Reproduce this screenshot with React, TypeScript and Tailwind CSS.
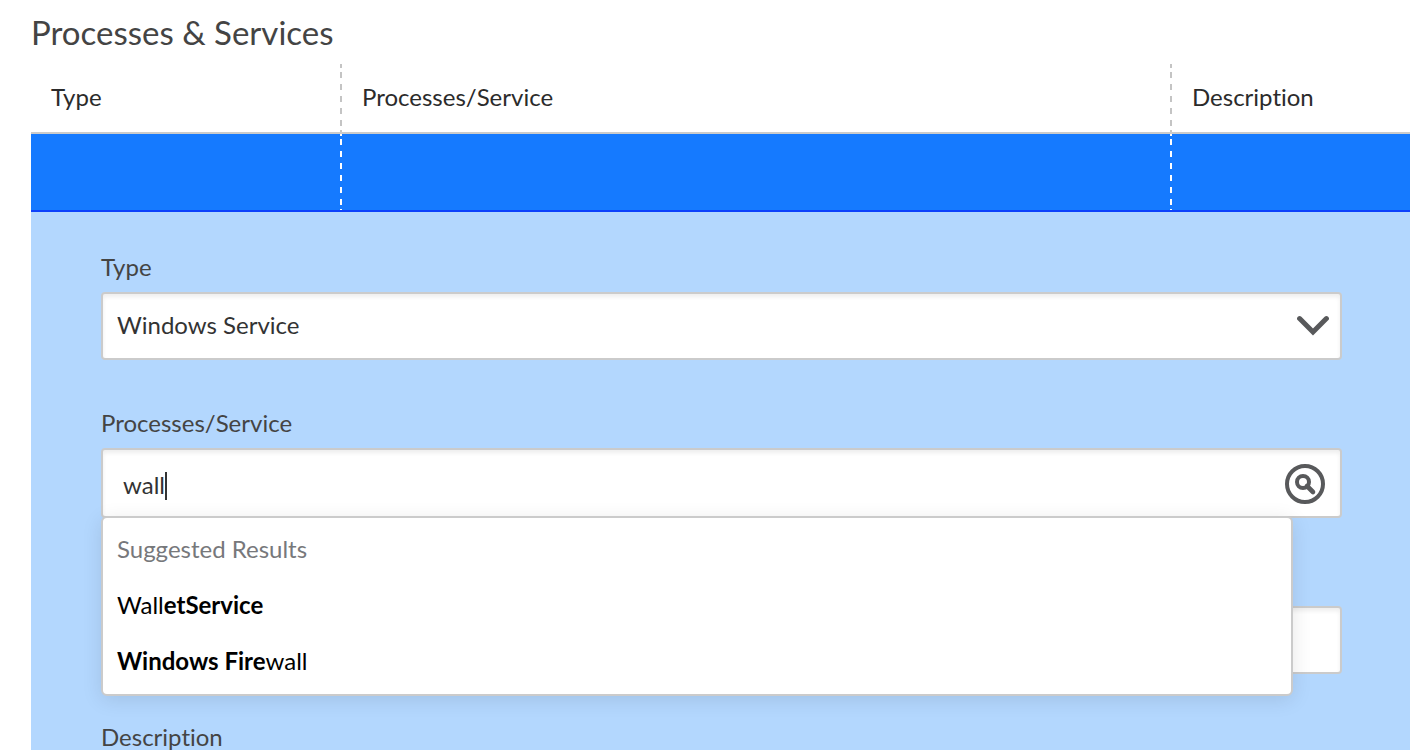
import { useState } from "react";

const suggestions = [
  { id: "wallet", parts: [{ text: "Wall" }, { text: "etService", bold: true }] },
  { id: "firewall", parts: [{ text: "Windows Fire", bold: true }, { text: "wall" }] },
];

const fieldClass =
  "block w-full rounded-[4px] border-2 border-[#cbcbcb] bg-white text-[#333] shadow-[inset_0_3px_4px_rgba(0,0,0,0.07)] outline-none";
const labelClass = "block text-2xl leading-8 text-[#444]";

// dashed column dividers, with a short dash at both ends
const headDash =
  "[background:linear-gradient(#c4c4c4,#c4c4c4)_right_top/2px_4px_no-repeat,linear-gradient(#c4c4c4,#c4c4c4)_right_bottom/2px_2px_no-repeat,linear-gradient(#c4c4c4_50%,transparent_50%)_right_8px/2px_12px_repeat-y]";
const rowDash =
  "[background:linear-gradient(#fff,#fff)_right_top/2px_2px_no-repeat,linear-gradient(#fff,#fff)_right_bottom/2px_1px_no-repeat,linear-gradient(#fff_50%,transparent_50%)_right_5px/2px_12px_repeat-y]";

function ChevronIcon() {
  return (
    <svg
      className="pointer-events-none absolute top-1/2 right-[13px] h-6 w-8 -translate-y-1/2"
      viewBox="0 0 32 24"
      fill="none"
      stroke="#58595b"
      strokeWidth="5"
    >
      <path d="M2.6 4.6 16 18 29.4 4.6" strokeLinecap="round" />
    </svg>
  );
}

function SearchIcon() {
  return (
    <svg className="h-10 w-10" viewBox="0 0 40 40" fill="none" stroke="#58595b">
      <circle cx="20" cy="20" r="18" strokeWidth="4" />
      <circle cx="18" cy="18" r="6" strokeWidth="4" />
      <path d="M22 22 28 28" strokeWidth="4.6" strokeLinecap="round" />
    </svg>
  );
}

export default function App() {
  const [type, setType] = useState("Windows Service");
  const [query, setQuery] = useState("wall");

  return (
    <div className="h-screen overflow-hidden bg-white pl-[31px] font-['Lato',sans-serif] [font-variant-ligatures:none]">
      <h1 className="pt-3 pb-3 text-[33px] leading-10 text-[#444]">Processes &amp; Services</h1>

      <table className="w-full table-fixed border-separate border-spacing-0 text-left text-2xl text-[#2b2b2b]">
        <thead>
          <tr className="h-[70px]">
            <th className={`w-[311px] border-b-2 border-[#cbcbcb] px-5 pb-[2px] font-normal ${headDash}`}>Type</th>
            <th className={`border-b-2 border-[#cbcbcb] px-5 pb-[2px] font-normal ${headDash}`}>Processes/Service</th>
            <th className="w-[238px] border-b-2 border-[#cbcbcb] px-5 pb-[2px] font-normal">Description</th>
          </tr>
        </thead>
        <tbody>
          <tr className="h-[78px] bg-[#157aff]">
            <td className={`border-b-2 border-[#0d41fb] ${rowDash}`} />
            <td className={`border-b-2 border-[#0d41fb] ${rowDash}`} />
            <td className="border-b-2 border-[#0d41fb]" />
          </tr>
        </tbody>
      </table>

      <form className="bg-[#b3d7fe] pt-[39px] pr-[68px] pb-10 pl-[70px]" onSubmit={(e) => e.preventDefault()}>
        <label htmlFor="type" className={labelClass}>
          Type
        </label>
        <div className="relative mt-[9px]">
          <select
            id="type"
            value={type}
            onChange={(e) => setType(e.target.value)}
            className={`${fieldClass} h-[68px] appearance-none px-[14px] pb-[2px] text-2xl`}
          >
            <option>Windows Service</option>
            <option>Process</option>
          </select>
          <ChevronIcon />
        </div>

        <label htmlFor="service" className={`${labelClass} mt-[47px]`}>
          Processes/Service
        </label>
        <div className="relative mt-[9px]">
          <input
            id="service"
            type="text"
            autoComplete="off"
            value={query}
            onChange={(e) => setQuery(e.target.value)}
            className={`${fieldClass} h-[70px] pt-[2px] pr-16 pl-5 text-2xl caret-transparent`}
          />
          {/* text cursor */}
          <span className="absolute top-6 left-16 h-7 w-[2px] bg-[#333]" />
          <button type="button" aria-label="Search" className="absolute top-4 right-[17px]">
            <SearchIcon />
          </button>

          <div className="absolute top-[68px] right-[49px] left-0 z-10 rounded-[6px] border-2 border-[#cbcbcb] bg-white pt-[3px] pb-[5px] text-2xl leading-8 shadow-[0_4px_20px_rgba(0,0,0,0.1)]">
            <p className="px-[14px] py-3 text-[#77787b]">Suggested Results</p>
            <ul>
              {suggestions.map((item) => (
                <li key={item.id} className="px-[14px] py-3 text-black">
                  {item.parts.map((part) => (
                    <span key={part.text} className={part.bold ? "font-bold" : ""}>
                      {part.text}
                    </span>
                  ))}
                </li>
              ))}
            </ul>
          </div>
        </div>

        <input type="text" aria-label="Name" className={`${fieldClass} mt-[88px] h-[68px] px-[14px] text-2xl`} />

        <label htmlFor="description" className={`${labelClass} mt-[47px]`}>
          Description
        </label>
        <input id="description" type="text" className={`${fieldClass} mt-[9px] h-[68px] px-[14px] text-2xl`} />
      </form>
    </div>
  );
}
